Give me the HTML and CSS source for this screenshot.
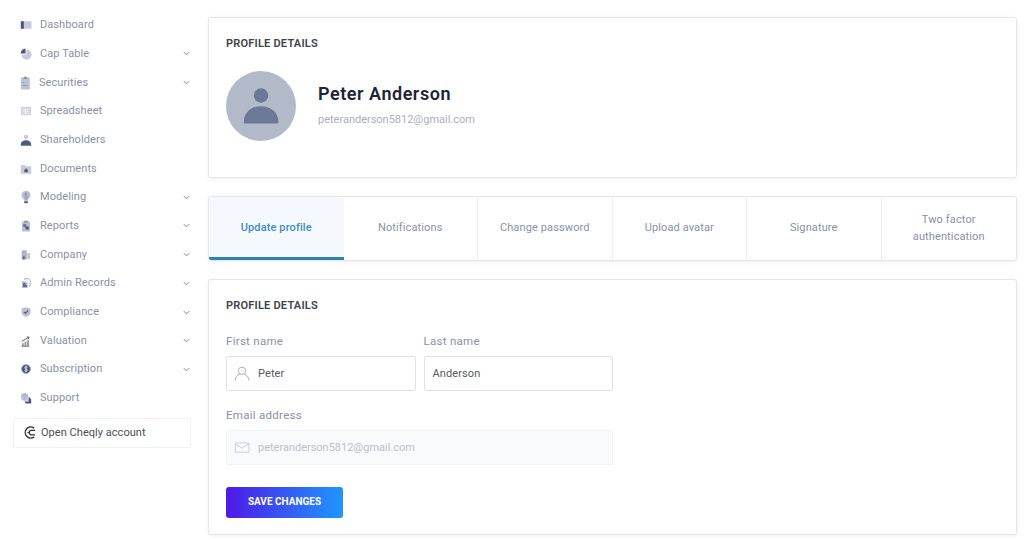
FILE: index.html
```html
<!DOCTYPE html>
<html lang="en">
<head>
<meta charset="utf-8">
<title>Profile</title>
<link rel="stylesheet" href="styles.css">
</head>
<body>
<div class="app">
<aside class="sidebar">
<nav class="menu">
<a class="item"><svg class="icon" viewBox="0 0 12 12"><rect x="1" y="2.2" width="10.5" height="7.6" rx=".7" fill="#c5cbda"/><path d="M.8 2.2h3v7.6h-3z" fill="#475780"/></svg><span>Dashboard</span></a>
<a class="item"><svg class="icon" viewBox="0 0 12 12"><path d="M6.3 1.600A5 5 0 1 1 1.600 6.600h4.700z" fill="#c5cbda"/><path d="M5.500.6v5H.7A4.900 4.900 0 0 1 5.500.6z" fill="#475780"/></svg><span>Cap Table</span><svg class="chev" viewBox="0 0 8 6"><path d="M1.500 1.800 4 4l2.500-2.200"/></svg></a>
<a class="item"><svg class="icon tall" viewBox="0 0 12 14"><rect x=".8" y="1.400" width="9" height="12" rx="1" fill="#bcc3d3"/><path d="M3.300 2.700V1.400h1a1 1 0 0 1 2 0h1v1.300z" fill="#7b86a3"/><path d="M2.500 6.500h2m-2 3h5" stroke="#8590ab" stroke-width=".8"/></svg><span class="securities">Securities</span><svg class="chev" viewBox="0 0 8 6"><path d="M1.500 1.800 4 4l2.500-2.200"/></svg></a>
<a class="item"><svg class="icon" viewBox="0 0 12 12"><rect x="1" y="1.800" width="10" height="8.500" rx="1" fill="#ccd2de"/><path d="M2.500 4.200h7M2.500 6.300h7M2.500 8.300h7M5.500 4v4.600" stroke="#fff" stroke-width=".65"/></svg><span>Spreadsheet</span></a>
<a class="item"><svg class="icon" viewBox="0 0 12 12"><circle cx="6" cy="2.900" r="2.200" fill="#c7cdd9"/><path d="M.8 11.700v-1C.8 7.800 3 6.200 6 6.200s5.200 1.600 5.200 4.500v1z" fill="#4a5c86"/></svg><span>Shareholders</span></a>
<a class="item"><svg class="icon" viewBox="0 0 12 12"><path d="M.8 2h4l1 1.200h5.400v7.600H.8z" fill="#c5ccd9"/><path d="M4.300 9.300V6.900L6.100 5.300l1.800 1.600v2.400z" fill="#4a5c86"/></svg><span>Documents</span></a>
<a class="item"><svg class="icon tall" viewBox="0 0 12 14"><path d="M6 .7a4.500 4.500 0 0 0-2.500 8.200l.7 1.900h3.600l.7-1.900A4.500 4.500 0 0 0 6 .7z" fill="#b9c0d0"/><path d="M7.500 3.700C6.700 3 4.600 3 4.600 4.200S7.500 5.300 7.500 6.700 5.200 7.900 4.400 7.100M6 2.500v8" fill="none" stroke="#8893ac" stroke-width=".8"/><path d="M4.200 11.200h3.600v1l-.8 1H5l-.8-1z" fill="#475780"/></svg><span>Modeling</span><svg class="chev" viewBox="0 0 8 6"><path d="M1.500 1.800 4 4l2.500-2.200"/></svg></a>
<a class="item"><svg class="icon" viewBox="0 0 12 12"><rect x="2" y="1.500" width="8" height="10" rx=".8" fill="#b8bfd0"/><rect x="4" y=".7" width="4" height="1.800" fill="#8c96af"/><circle cx="4.600" cy="5.300" r="1.600" fill="#61708f"/><path d="M5 6.500h3.700v3H6z" fill="#475780"/></svg><span>Reports</span><svg class="chev" viewBox="0 0 8 6"><path d="M1.500 1.800 4 4l2.500-2.200"/></svg></a>
<a class="item"><svg class="icon" viewBox="0 0 12 12"><path d="M1.800 1.400h5v9h-5z" fill="#a2abc0"/><path d="M7.200 3.800h3v6.600h-3z" fill="#ccd2de"/><path d="M3 3.300h2.800M3 5.300h2.800" stroke="#c9cfdb" stroke-width=".8"/><path d="M2.700 7.500h2v2.900h-2z" fill="#56658a"/><path d="M8.200 5.500h1.200m-1.200 2h1.200" stroke="#929cb4" stroke-width=".7"/></svg><span>Company</span><svg class="chev" viewBox="0 0 8 6"><path d="M1.500 1.800 4 4l2.500-2.200"/></svg></a>
<a class="item"><svg class="icon" viewBox="0 0 12 12"><path d="M4.800 3V1.600h3.700l1.700 1.800v5.700H8.500" fill="none" stroke="#a9b2c5"/><path d="M2 4.200h3.700l2 2V11H2z" fill="#b5bdce"/><path d="M3 6h2.500v2H7v2H3z" fill="#5b6a8d"/></svg><span>Admin Records</span><svg class="chev" viewBox="0 0 8 6"><path d="M1.500 1.800 4 4l2.500-2.200"/></svg></a>
<a class="item"><svg class="icon" viewBox="0 0 12 12"><path d="M6 1.200 10.500 2.600v3.600C10.500 8.700 8.300 10.200 6 11 3.700 10.200 1.500 8.700 1.500 6.200V2.600z" fill="#b9c1d1"/><path d="M3.900 5.900 5.400 7.400l2.800-3" fill="none" stroke="#4d5d83" stroke-width="1.200"/></svg><span>Compliance</span><svg class="chev" viewBox="0 0 8 6"><path d="M1.500 1.800 4 4l2.500-2.200"/></svg></a>
<a class="item"><svg class="icon" viewBox="0 0 12 12"><path d="M2 8.200h1.700v2.600H2zm2.600-1.400h1.700v4H4.600zM7.200 5.300h1.700v5.500H7.200z" fill="#8e8e92"/><path d="M1.800 6.300 8.500 2.500M6.700 1.900l2.500.2-1.100 2.300M1.500 11.200h7.800" fill="none" stroke="#55565c" stroke-width=".9"/></svg><span>Valuation</span><svg class="chev" viewBox="0 0 8 6"><path d="M1.500 1.800 4 4l2.500-2.200"/></svg></a>
<a class="item"><svg class="icon" viewBox="0 0 12 12"><circle cx="6" cy="6" r="4.500" fill="#475780" stroke="#a9b2c5" stroke-width=".8"/><path d="M7.500 4.300C6.700 3.600 4.700 3.700 4.700 4.900S7.400 5.900 7.400 7.100 5.300 8.400 4.500 7.700M6 2.800v6.400" fill="none" stroke="#e5e9f0" stroke-width=".9"/></svg><span>Subscription</span><svg class="chev" viewBox="0 0 8 6"><path d="M1.500 1.800 4 4l2.500-2.200"/></svg></a>
<a class="item"><svg class="icon" viewBox="0 0 12 12"><path d="M8.500 5h.7l2 2.500v4H5.500l-1-2.100h4z" fill="#475780"/><path d="M4.700.9a3.900 3.900 0 0 1 3.900 3.900v3.900H4.700a3.900 3.900 0 1 1 0-7.800z" fill="#bcc4d2"/><path d="M3.500 4c0-2 2.600-1.700 2.500-.2 0 1-1.200.9-1.200 2m0 .6v.9" fill="none" stroke="#8f99af" stroke-width=".7"/></svg><span>Support</span></a>
</nav>
<a class="cheqly"><svg class="cheqly-icon" viewBox="0 0 12 12"><path d="M10.300 2A5.100 5.100 0 1 0 10.300 10M11.200 4H7.200A2.200 2.200 0 0 0 7.200 8.200h3.900" fill="none" stroke="#333" stroke-width="1.300"/><path d="M4 6.100h2.500" stroke="#333" stroke-width=".8"/></svg><span>Open Cheqly account</span></a>
</aside>
<main class="main">
<section class="card summary">
<h2 class="title">PROFILE DETAILS</h2>
<div class="person">
<svg class="avatar" viewBox="0 0 70 70"><circle cx="35" cy="35" r="35" fill="#b2bac9"/><circle cx="35" cy="24.500" r="7.200" fill="#6b7896"/><path d="M18 52.500C17 42 25 35.200 35 35.200S53 42 52.500 51.500a1 1 0 0 1-1 1z" fill="#6b7896"/></svg>
<div class="identity"><h1 class="name">Peter Anderson</h1><p class="mail">peteranderson5812@gmail.com</p></div>
</div>
</section>
<div class="tabs">
<a class="tab active">Update profile</a>
<a class="tab">Notifications</a>
<a class="tab">Change password</a>
<a class="tab">Upload avatar</a>
<a class="tab">Signature</a>
<a class="tab">Two factor<br>authentication</a>
</div>
<section class="card form">
<h2 class="title">PROFILE DETAILS</h2>
<div class="fields">
<label class="field"><span class="label">First name</span><span class="box"><svg class="box-icon" viewBox="0 0 16 16"><circle cx="8" cy="4.800" r="3.700"/><path d="M1.200 14.500c0-3.500 2.300-5.500 4.800-6.300M14.800 14.500c0-3.500-2.300-5.500-4.800-6.300"/></svg><span>Peter</span></span></label>
<label class="field"><span class="label">Last name</span><span class="box"><span>Anderson</span></span></label>
<label class="field wide"><span class="label">Email address</span><span class="box disabled"><svg class="box-icon" viewBox="0 0 16 16"><path d="M1.200 3h13.800v9.200H1.200zM1.200 3.700 8 8.200 15 3.700"/></svg><span>peteranderson5812@gmail.com</span></span></label>
</div>
<button class="save">SAVE CHANGES</button>
</section>
</main>
</div>
</body>
</html>
```
FILE: styles.css
```css
* { box-sizing: border-box; }
body {
  margin: 0;
  height: 541px;
  overflow: hidden;
  background: #fff;
  color: #8691a8;
  font: 400 11px/16px Roboto, "Liberation Sans", sans-serif;
}
h1, h2, p { margin: 0; }
.app { display: flex; height: 541px; }
.sidebar { width: 208px; flex: none; padding: 10.800px 17.500px 0 13px; }
.menu { display: flex; flex-direction: column; }
.item {
  display: flex;
  align-items: center;
  height: 28.700px;
  padding-left: 7px;
  letter-spacing: .08px;
}
.icon { width: 12px; height: 12px; margin-right: 8px; flex: none; }
.icon.tall { height: 14px; }
.securities { margin-left: -1px; }
.chev { width: 9px; height: 7px; margin-left: auto; }
.chev path { fill: none; stroke: #a2aabb; stroke-width: 1; }
.cheqly {
  display: flex;
  align-items: center;
  height: 30px;
  margin-top: 5.500px;
  padding-left: 9px;
  border: 1px solid #f0f1f3;
  border-radius: 2px;
  color: #4b4e55;
  letter-spacing: .04px;
}
.cheqly-icon { width: 13px; height: 13px; margin-right: 5px; }
.main {
  width: 809px;
  flex: none;
  padding-top: 17px;
  display: flex;
  flex-direction: column;
  gap: 18px;
}
.card, .tabs {
  border: 1px solid #e4e6e8;
  border-radius: 3px;
  background: #fff;
  box-shadow: 0 1px 4px rgba(0, 0, 0, .07);
}
.card { padding: 17px; }
.summary { height: 161px; }
.title { font-size: 11px; line-height: 17px; font-weight: 600; color: #3d424b; letter-spacing: .22px; }
.person { display: flex; margin-top: 19px; gap: 22px; }
.avatar { width: 70px; height: 70px; }
.identity { padding-top: 10px; }
.name { font-size: 18px; line-height: 25px; font-weight: 600; color: #1b2434; letter-spacing: .54px; }
.mail { margin-top: 6px; color: #a6afbf; letter-spacing: -.01px; }
.tabs { height: 65px; display: grid; grid-template-columns: repeat(6, 1fr); overflow: hidden; }
.tab {
  display: flex;
  align-items: center;
  justify-content: center;
  text-align: center;
  line-height: 16.500px;
  letter-spacing: .12px;
  border-right: 1px solid #eceef0;
}
.tab:last-child { border-right: 0; }
.tab.active {
  padding-top: 3px;
  border-bottom: 3px solid #2b81b9;
  border-right: 0;
  background: #f5f9fd;
  color: #3c8dc1;
  font-weight: 500;
}
.form { height: 256px; }
.fields { width: 387px; margin-top: 19px; display: grid; grid-template-columns: 1fr 1fr; gap: 16px 8px; }
.field { display: flex; flex-direction: column; gap: 6px; }
.wide { grid-column: 1 / 3; }
.label { line-height: 17px; font-size: 11.500px; letter-spacing: .28px; }
.box {
  display: flex;
  align-items: center;
  height: 35px;
  padding: 0 8px;
  border: 1px solid #dfe1e5;
  border-radius: 2px;
  color: #555960;
  letter-spacing: .1px;
}
.box-icon { width: 16px; height: 16px; margin: 0 8px 0 -1px; fill: none; stroke: #a9b0c0; }
.disabled { border-color: #f1f3f9; background: #f9fafe; color: #bdc0c9; letter-spacing: -.01px; }
.disabled .box-icon { stroke: #c9cedb; }
.save {
  display: block;
  width: 117px;
  height: 31px;
  margin-top: 21.500px;
  padding: 0;
  border: 0;
  border-radius: 3px;
  background: linear-gradient(90deg, #4f19e7, #1e97ff);
  color: #fff;
  font: 700 10px/30px Roboto, "Liberation Sans", sans-serif;
  letter-spacing: 0;
}
```
